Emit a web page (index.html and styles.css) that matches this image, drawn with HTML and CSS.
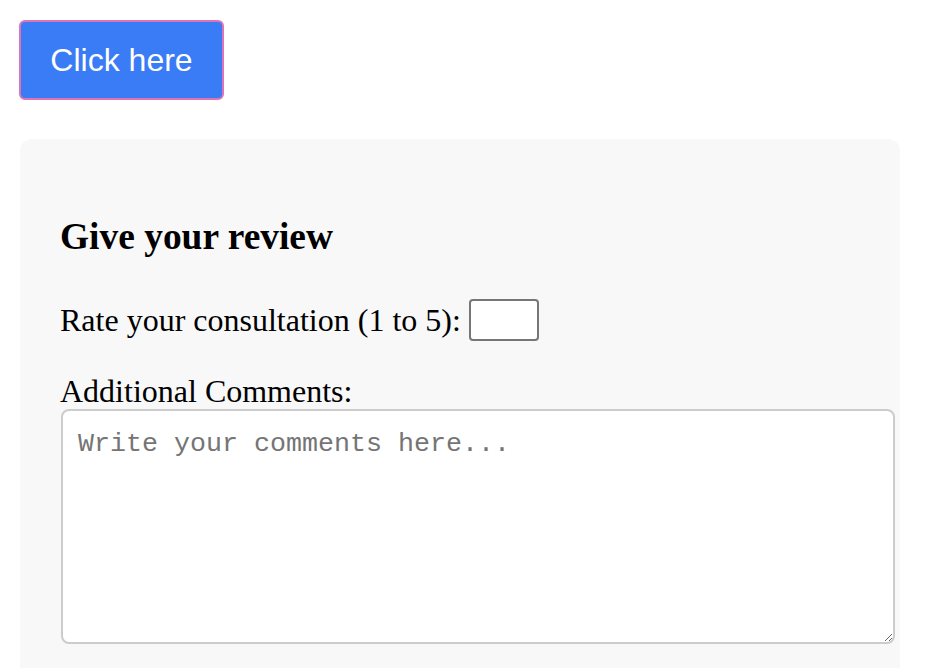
FILE: index.html
```html
<!DOCTYPE html>
<html>
<head>
<meta charset="utf-8">
<link rel="stylesheet" href="styles.css">
</head>
<body>
<button class="cta">Click here</button>
<div class="panel">
  <h3 class="title">Give your review</h3>
  <div class="rate-row">
    <label class="label" for="rating">Rate your consultation (1 to 5):</label>
    <input class="rating" id="rating" type="text">
  </div>
  <label class="label block" for="comments">Additional Comments:</label>
  <textarea class="comments" id="comments" placeholder="Write your comments here..."></textarea>
</div>
</body>
</html>
```
FILE: styles.css
```css
html, body {
  margin: 0;
  background: #ffffff;
}
body {
  padding: 20px 20px 0 20px;
  font-family: "Liberation Serif", "Times New Roman", serif;
  font-size: 32px;
  color: #000;
}
.cta {
  display: block;
  margin: 0 0 39px -1px;
  width: 205px;
  height: 80px;
  padding: 0;
  background: #3a7bf6;
  border: 2px solid #dc74b6;
  border-radius: 6px;
  color: #ffffff;
  font-family: "Liberation Sans", Arial, sans-serif;
  font-size: 32px;
}
.panel {
  width: 800px;
  padding: 40px 40px 60px 40px;
  background: #f8f8f8;
  border-radius: 12px;
}
.title {
  margin: 37px 0 39px 0;
  font-size: 37.44px;
  font-weight: bold;
  line-height: 42px;
}
.rate-row {
  display: flex;
  align-items: center;
  height: 46px;
}
.label {
  line-height: 37px;
}
.rating {
  box-sizing: border-box;
  width: 70px;
  height: 42px;
  margin: 0 0 0 8px;
  border: 2px solid #767676;
  border-radius: 4px;
  background: #fff;
}
.block {
  display: block;
  margin-top: 30px;
}
.comments {
  display: block;
  box-sizing: border-box;
  width: 834px;
  height: 235px;
  margin: -1px 0 0 1px;
  padding: 18px 15px;
  border: 2px solid #cccccc;
  border-radius: 8px;
  background: #fff;
  font-family: "Liberation Mono", "Courier New", monospace;
  font-size: 26.67px;
  line-height: 30px;
}
.comments::placeholder {
  color: #757575;
}
```
